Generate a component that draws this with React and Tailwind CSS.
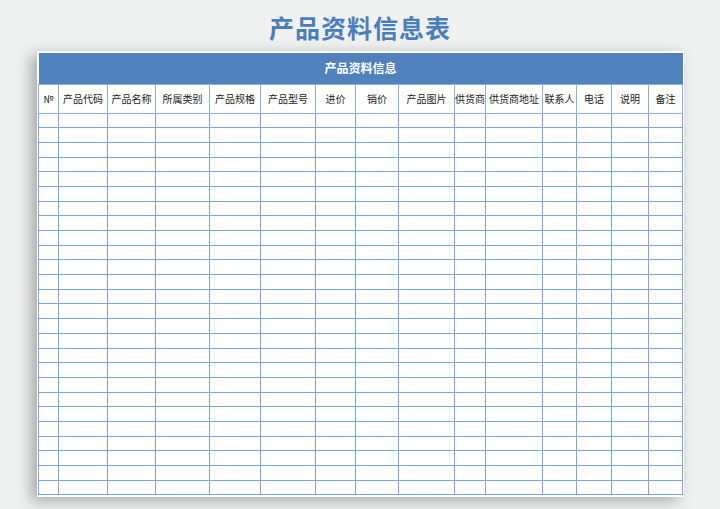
const cols=[["№",20],["产品代码",49],["产品名称",48],["所属类别",54],["产品规格",51],["产品型号",55],["进价",40],["销价",43],["产品图片",56],["供货商",31],["供货商地址",57],["联系人",34],["电话",35],["说明",37],["备注",34]];
export default function App(){
  const rows=Array.from({length:26});
  return <div className="w-[720px] h-[509px] bg-[#eff0f0] overflow-hidden" style={{fontFamily:'"Microsoft YaHei","Noto Sans CJK SC",sans-serif'}}>
    <div className="h-[51px] flex items-center justify-center pt-[5px]">
      <span className="text-[25px] font-bold text-[#4a7ebb] tracking-[1px]">产品资料信息表</span>
    </div>
    <div className="ml-[37px] w-[647px] bg-white pl-[1px] pr-[1px] pt-[2px] pb-[2px] shadow-[-6px_4px_14px_rgba(0,0,0,0.3)]">
      <table className="border-collapse table-fixed w-[644px]">
        <colgroup>{cols.map((c,i)=><col key={i} style={{width:c[1]}}/>)}</colgroup>
        <thead>
          <tr><th colSpan={15} className="h-[31px] bg-[#4f81bd] text-white text-[12px] font-bold text-center">产品资料信息</th></tr>
          <tr>{cols.map((c,i)=><th key={i} className="h-[29px] border border-[#8db0da] text-[10px] font-normal text-[#222] text-center whitespace-nowrap overflow-hidden p-0">{c[0]}</th>)}</tr>
        </thead>
        <tbody>{rows.map((_,r)=><tr key={r}>{cols.map((c,i)=><td key={i} className="h-[14.7px] border border-[#7fa4d6] p-0"></td>)}</tr>)}</tbody>
      </table>
    </div>
  </div>
}
